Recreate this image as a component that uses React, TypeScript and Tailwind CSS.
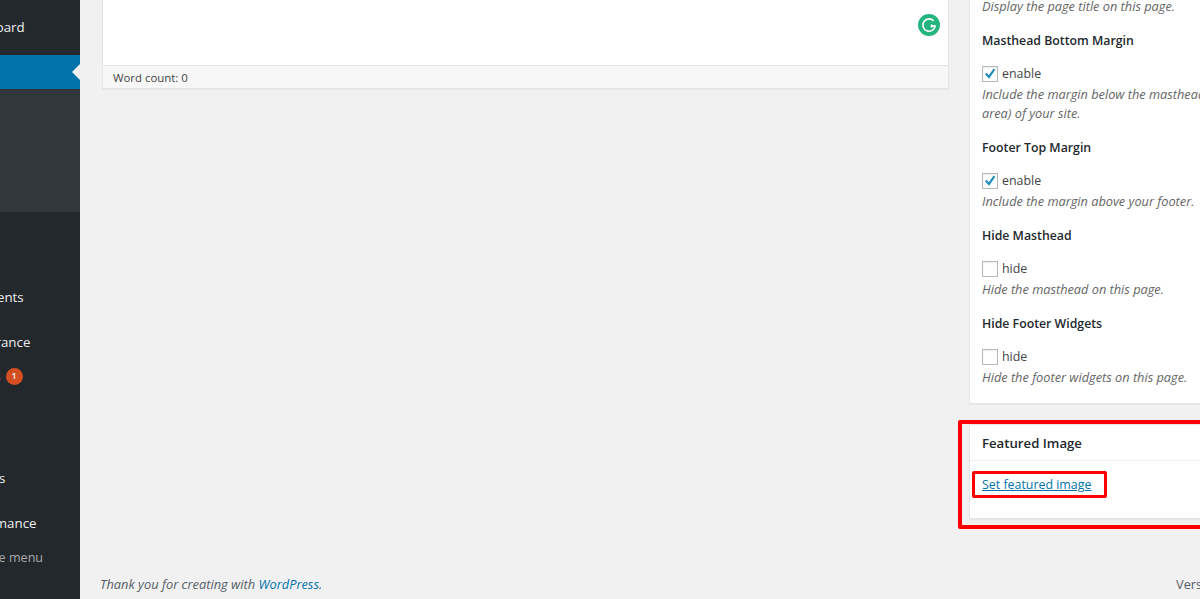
import React from "react";

const font = { fontFamily: '"Open Sans", "Noto Sans", sans-serif' };

function Row({ label, badge, dim }: { label?: string; badge?: boolean; dim?: boolean }) {
  return (
    <div className={`h-[34px] shrink-0 flex items-center pt-[2px] pl-[36px] whitespace-nowrap ${dim ? "text-[12.6px] text-[#aaaaaa]" : "text-[13.3px] text-[#eeeeee]"}`}>
      <span>{label}</span>
      {badge && (
        <span className="ml-[5px] -mt-[2px] w-[17px] h-[17px] rounded-full bg-[#d54e21] text-white text-[9px] font-semibold flex items-center justify-center">
          1
        </span>
      )}
    </div>
  );
}

function Sep() {
  return <div className="h-[11px] shrink-0" />;
}

function Sidebar() {
  return (
    <aside className="w-20 h-full shrink-0 overflow-hidden bg-[#23282d]">
      <div className="w-[160px] -ml-20 pt-[10px] flex flex-col">
        <Row label="Dashboard" />
        <Sep />
        <div className="relative h-[34px] shrink-0 bg-[#0073aa]">
          <div className="absolute right-0 top-[9px] w-0 h-0 border-y-[8px] border-y-transparent border-r-[8px] border-r-[#f1f1f1]" />
        </div>
        <div className="h-[123px] shrink-0 bg-[#32373c]" />
        <Row />
        <Row />
        <Row label="Comments" />
        <Sep />
        <Row label="Appearance" />
        <Row label="Plugins" badge />
        <Row />
        <Row />
        <Row label="Settings" />
        <Sep />
        <Row label="Performance" />
        <Row label="Collapse menu" dim />
      </div>
    </aside>
  );
}

function Check({ on, label }: { on?: boolean; label: string }) {
  return (
    <div className="flex items-center h-4 mt-[15px]">
      <span className="w-4 h-4 shrink-0 bg-white border border-[#b4b9be] shadow-[inset_0_1px_2px_rgba(0,0,0,0.07)] flex items-center justify-center">
        {on && (
          <svg viewBox="0 0 16 16" className="w-[14px] h-[14px]">
            <path d="M2.2 8.2 L4 6.6 L6.6 9.4 L12.2 1.8 L14 3.2 L7 13.4 Z" fill="#1e8cbe" />
          </svg>
        )}
      </span>
      <span className="ml-1 text-[12.4px] leading-4 text-[#444444]">{label}</span>
    </div>
  );
}

function Desc({ children }: { children: React.ReactNode }) {
  return <p className="mt-[3px] text-[12.75px] leading-[19px] italic whitespace-nowrap text-[#666666]">{children}</p>;
}

function Option({ title, on, label, desc }: { title: string; on?: boolean; label: string; desc: React.ReactNode }) {
  return (
    <section className="mt-[15px]">
      <h3 className="h-5 text-[12.3px] leading-5 font-semibold text-[#23282d]">{title}</h3>
      <Check on={on} label={label} />
      <Desc>{desc}</Desc>
    </section>
  );
}

function Grammarly() {
  return (
    <svg viewBox="0 0 22 22" className="absolute right-[8px] top-[14px] w-[22px] h-[22px]">
      <circle cx="11" cy="11" r="11" fill="#24b47e" />
      <path
        d="M15.6 6.8 A6.2 6.2 0 1 0 17.2 12 H12.6"
        fill="none"
        stroke="#ffffff"
        strokeWidth="1.6"
      />
      <path d="M13 9.9 L16.2 12 L13 14.1 Z" fill="#ffffff" />
    </svg>
  );
}

function Editor() {
  return (
    <div className="w-[847px] shrink-0 self-start bg-white border-x border-b border-[#e5e5e5] shadow-[0_1px_1px_rgba(0,0,0,0.04)]">
      <div className="relative h-[65px]">
        <Grammarly />
      </div>
      <div className="h-[23px] border-t border-[#e5e5e5] bg-[#f7f7f7] pl-[10px] text-[11.4px] leading-[23px] text-[#444444]">
        Word count: 0
      </div>
    </div>
  );
}

function Sidecol() {
  return (
    <div className="w-[280px] shrink-0 ml-5 -mt-[3px]">
      <div className="bg-white border-x border-b border-[#e5e5e5] shadow-[0_1px_1px_rgba(0,0,0,0.04)] px-3 pb-[16px]">
        <p className="text-[12.75px] leading-[19px] italic text-[#666666]">Display the page title on this page.</p>
        <Option
          title="Masthead Bottom Margin"
          on
          label="enable"
          desc={
            <>
              Include the margin below the masthead (the header
              <br />
              area) of your site.
            </>
          }
        />
        <Option title="Footer Top Margin" on label="enable" desc="Include the margin above your footer." />
        <Option title="Hide Masthead" label="hide" desc="Hide the masthead on this page." />
        <Option title="Hide Footer Widgets" label="hide" desc="Hide the footer widgets on this page." />
      </div>
      <div className="mt-5 h-[95px] bg-white border border-[#e5e5e5] shadow-[0_1px_1px_rgba(0,0,0,0.04)]">
        <h2 className="h-[36px] border-b border-[#eeeeee] px-3 text-[13.2px] leading-[36px] font-semibold text-[#23282d]">
          Featured Image
        </h2>
        <div className="px-3 pt-[14px] leading-5">
          <a className="block text-[12.4px] leading-5 text-[#0073aa] underline">Set featured image</a>
        </div>
      </div>
    </div>
  );
}

export default function App() {
  return (
    <div className="relative w-[1200px] h-[599px] overflow-hidden bg-[#f1f1f1] flex" style={font}>
      <Sidebar />
      <main className="flex-1 min-w-0 h-full overflow-hidden flex flex-col">
        <div className="flex pl-[22px]">
          <Editor />
          <Sidecol />
        </div>
        <footer className="mt-auto pl-5 pb-[5px] flex whitespace-nowrap text-[12.85px] leading-5 text-[#555d66]">
          <span className="w-[1076px] shrink-0 italic">
            Thank you for creating with <a className="text-[#0073aa]">WordPress</a>.
          </span>
          <span>Version 4.9.1</span>
        </footer>
      </main>
      <div className="absolute left-[958px] top-[420px] w-[300px] h-[109px] border-[4px] border-[#ff0000] rounded-[2px]" />
      <div className="absolute left-[972px] top-[471px] w-[135px] h-[27px] border-[3px] border-[#ff0000] rounded-[2px]" />
    </div>
  );
}
